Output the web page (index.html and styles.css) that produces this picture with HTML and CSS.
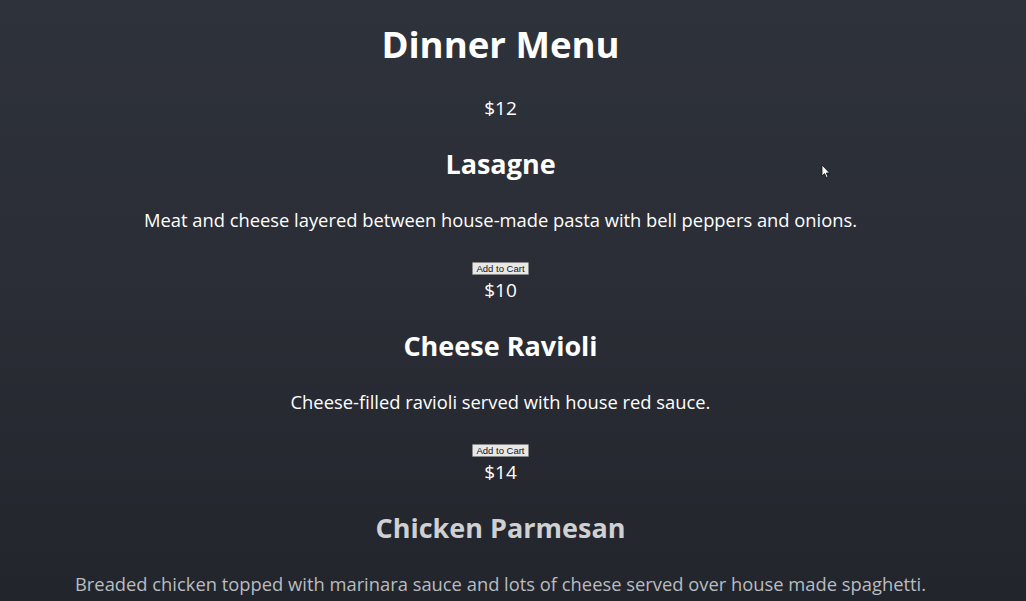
FILE: index.html
```html
<!DOCTYPE html>
<html>
<head>
<meta charset="utf-8">
<link rel="stylesheet" href="styles.css">
</head>
<body>
<main class="menu">
  <h1 class="title">Dinner Menu</h1>
  <section class="item">
    <p class="price">$12</p>
    <h2 class="name">Lasagne</h2>
    <p class="desc">Meat and cheese layered between house-made pasta with bell peppers and onions.</p>
    <button class="cart">Add to Cart</button>
  </section>
  <section class="item">
    <p class="price">$10</p>
    <h2 class="name">Cheese Ravioli</h2>
    <p class="desc">Cheese-filled ravioli served with house red sauce.</p>
    <button class="cart">Add to Cart</button>
  </section>
  <section class="item fade">
    <p class="price">$14</p>
    <h2 class="name">Chicken Parmesan</h2>
    <p class="desc">Breaded chicken topped with marinara sauce and lots of cheese served over house made spaghetti.</p>
  </section>
</main>
<svg class="cursor" width="10" height="15" viewBox="0 0 10 15"><path d="M1 1 L1 12 L3.6 9.6 L5.4 13.6 L7 12.9 L5.3 9 L8.6 9 Z" fill="#fff" stroke="#111" stroke-width="0.8"/></svg>
</body>
</html>
```
FILE: styles.css
```css
html, body {
  margin: 0;
  padding: 0;
  height: 100%;
}
body {
  background: linear-gradient(180deg, #2e323b 0%, #2a2d35 50%, #22252c 100%);
  font-family: "Open Sans", "Noto Sans", sans-serif;
  color: #fff;
  overflow: hidden;
}
.menu {
  width: 1001px;
  display: flex;
  flex-direction: column;
  align-items: center;
  padding-top: 20px;
  text-align: center;
}
.title {
  margin: 0 0 28px;
  font-size: 36.6px;
  line-height: 48px;
  font-weight: 700;
}
.item {
  display: flex;
  flex-direction: column;
  align-items: center;
}
.price {
  margin: 0 0 27px;
  font-size: 19px;
  line-height: 24px;
}
.name {
  margin: 0 0 27px;
  font-size: 27px;
  line-height: 34px;
  font-weight: 700;
}
.desc {
  margin: 0 0 30px;
  font-size: 18.35px;
  line-height: 24px;
}
.cart {
  margin: 0 0 3px;
  height: 13px;
  padding: 0 3px;
  font-family: "Liberation Sans", Arial, sans-serif;
  font-size: 9.5px;
  line-height: 11px;
  color: #111;
  background: #e8e8e8;
  border: 1px solid #8a8a8a;
  border-radius: 1px;
}
.fade .name { color: #cfd0d2; }
.fade .desc { color: #b9bcc0; }
.cursor {
  position: absolute;
  left: 821px;
  top: 164px;
}
```
